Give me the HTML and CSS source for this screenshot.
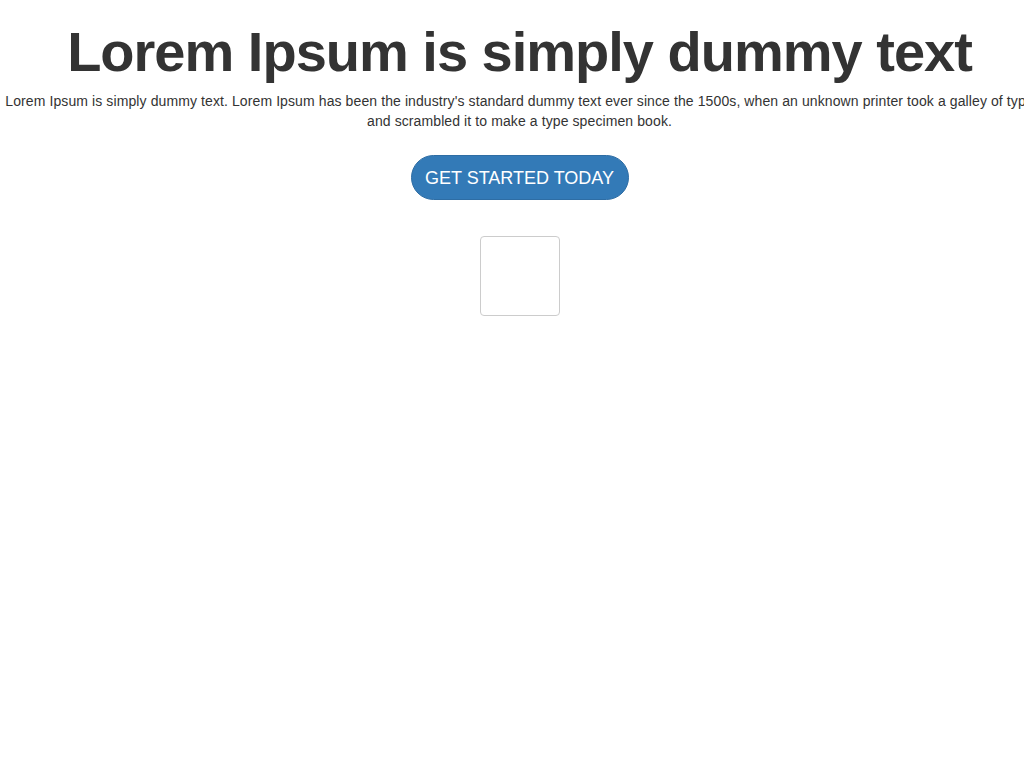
FILE: index.html
```html
<!DOCTYPE html>
<html>
<head>
<meta charset="utf-8">
<link rel="stylesheet" href="styles.css">
</head>
<body>
<div class="page">
  <section class="hero">
    <h1 class="hero-title">Lorem Ipsum is simply dummy text</h1>
    <p class="hero-text">Lorem Ipsum is simply dummy text. Lorem Ipsum has been the industry's standard dummy text ever since the 1500s, when an unknown printer took a galley of type and scrambled it to make a type specimen book.</p>
    <a class="btn-start" href="#">GET STARTED TODAY</a>
    <div class="thumb"></div>
  </section>
</div>
</body>
</html>
```
FILE: styles.css
```css
html, body {
  margin: 0;
  padding: 0;
  background: #fff;
  overflow-x: hidden;
}
body {
  font-family: "Liberation Sans", Arial, sans-serif;
  color: #333;
  font-size: 13px;
  line-height: 20px;
}
.page {
  width: 1039px;
}
.hero {
  display: flex;
  flex-direction: column;
  align-items: center;
  text-align: center;
  padding-top: 20px;
}
.hero-title {
  margin: 0;
  font-size: 56px;
  font-weight: 700;
  line-height: 64px;
  letter-spacing: -1px;
}
.hero-text {
  margin: 7px 0 0;
  font-size: 14px;
  line-height: 20px;
  letter-spacing: 0.1px;
}
.btn-start {
  margin-top: 24px;
  display: inline-flex;
  align-items: center;
  justify-content: center;
  width: 218px;
  height: 45px;
  box-sizing: border-box;
  background: #337ab7;
  border: 1px solid #2e6da4;
  border-radius: 23px;
  color: #fff;
  font-size: 18px;
  text-decoration: none;
}
.thumb {
  margin-top: 36px;
  width: 80px;
  height: 80px;
  box-sizing: border-box;
  border: 1px solid #ccc;
  border-radius: 4px;
}
```
